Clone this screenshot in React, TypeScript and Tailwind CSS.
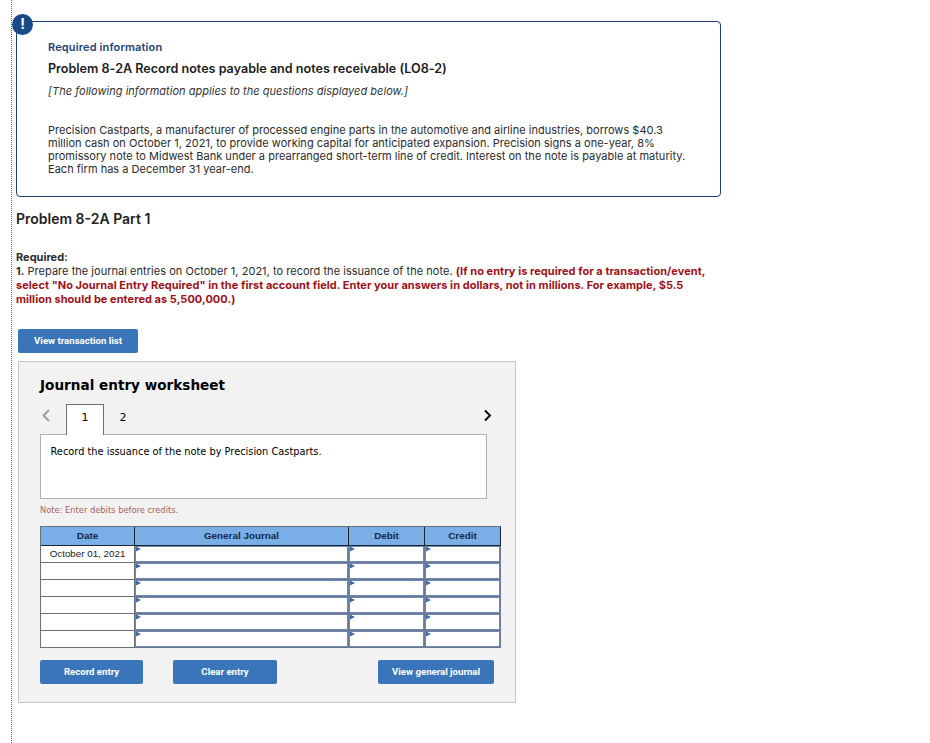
const rows = ["October 01, 2021", "", "", "", "", ""];

function EntryCell({ className }: { className: string }) {
  return (
    <div className={`${className} h-[17px] border-r border-b border-[#6a7a94]`}>
      <div className="h-full border border-[#7088ad] bg-white">
        <svg width="5" height="6" viewBox="0 0 5 6" className="-mt-px block">
          <path d="M0 0.5L5 3L0 5.5Z" fill="#3f6aa5" />
        </svg>
      </div>
    </div>
  );
}

function Button({ className, label }: { className: string; label: string }) {
  return (
    <button
      className={`${className} h-6 shrink-0 rounded-[2px] bg-[#3a75ba] pt-px text-center font-['Roboto',sans-serif] text-[9.6px] font-bold whitespace-nowrap text-white`}
    >
      {label}
    </button>
  );
}

function Arrow({ className, d }: { className: string; d: string }) {
  return (
    <svg width="8" height="13" viewBox="0 0 8 13" className={className}>
      <path d={d} fill="none" stroke="currentColor" strokeWidth="1.9" />
    </svg>
  );
}

function InfoBox() {
  return (
    <section className="relative h-[176px] w-[705px] rounded-[4px] border border-[#1f3f72] pt-[17px] pl-[31px] whitespace-nowrap">
      <div className="absolute -top-[8px] -left-[5px] flex size-[21px] items-center justify-center rounded-full bg-[#174a86] pb-[3px] text-[14px] font-bold text-white">
        !
      </div>
      <div className="text-[11px] leading-4 font-semibold tracking-[0.14px] text-[#1f4273]">Required information</div>
      <h1 className="mt-1.5 text-[12.6px] leading-4 font-semibold tracking-[-0.01px] text-[#1c1c1c]">
        Problem 8-2A Record notes payable and notes receivable (LO8-2)
      </h1>
      <p className="mt-1.5 text-[11px] leading-4 tracking-[0.03px] text-[#333] italic">
        [The following information applies to the questions displayed below.]
      </p>
      <p className="mt-[25px] text-[11px] leading-[13px] tracking-[0.02px] text-[#2b2b2b]">
        Precision Castparts, a manufacturer of processed engine parts in the automotive and airline industries, borrows $40.3
        <br />
        million cash on October 1, 2021, to provide working capital for anticipated expansion. Precision signs a one-year, 8%
        <br />
        promissory note to Midwest Bank under a prearranged short-term line of credit. Interest on the note is payable at maturity.
        <br />
        Each firm has a December 31 year-end.
      </p>
    </section>
  );
}

function Worksheet() {
  return (
    <section className="mt-2 ml-0.5 h-[342px] w-[498px] border border-[#c3c6c8] bg-[#f2f2f2] pl-[21px] font-['DejaVu_Sans',sans-serif]">
      <h2 className="pt-[13px] text-[13.6px] leading-5 font-bold text-black">Journal entry worksheet</h2>
      <div className="mt-[9px] flex h-[30px] w-[460px] text-[11px] text-black">
        <Arrow className="mt-[5px] ml-0.5 text-[#9a9a9a]" d="M7 1L1.5 6.5L7 12" />
        <div className="z-10 -mb-px ml-4 flex w-[38px] justify-center border border-b-0 border-[#6f6f6f] bg-white pt-[5px]">1</div>
        <div className="w-[38px] pt-1.5 text-center">2</div>
        <Arrow className="mt-[5px] mr-2 ml-auto text-black" d="M1 1.5L6 6.5L1 11.5" />
      </div>
      <div className="h-[65px] w-[447px] border border-[#b0b0b0] bg-white pt-2.5 pl-[9.5px] text-[9.8px] leading-[14px] text-black">
        Record the issuance of the note by Precision Castparts.
      </div>
      <div className="mt-[5px] text-[8.3px] leading-3 text-[#a8635e]">Note: Enter debits before credits.</div>

      <div className="mt-[10px] w-[461px] border-l border-[#6b6f78] font-['Liberation_Sans',sans-serif]">
        <div className="flex h-5 border-t border-b border-t-[#6b6f78] border-b-[#1b2430] bg-[#7aaee6] text-center text-[9.9px] leading-[18px] font-bold text-[#14294a]">
          <div className="w-[94px] border-r border-[#1b2430]">Date</div>
          <div className="w-[214px] border-r border-[#1b2430]">General Journal</div>
          <div className="w-[76px] border-r border-[#1b2430]">Debit</div>
          <div className="w-[76px] border-r border-[#1b2430]">Credit</div>
        </div>
        {rows.map((date, i) => (
          <div key={i} className="flex">
            <div className="h-[17px] w-[94px] border-r border-b border-[#6b6f78] bg-white text-center text-[9.8px] leading-4 text-[#222]">
              {date}
            </div>
            <EntryCell className="w-[214px]" />
            <EntryCell className="w-[76px]" />
            <EntryCell className="w-[76px]" />
          </div>
        ))}
      </div>

      <div className="mt-3 flex w-[454px]">
        <Button className="w-[103px]" label="Record entry" />
        <Button className="ml-[30px] w-[104px]" label="Clear entry" />
        <Button className="ml-auto w-[116px]" label="View general journal" />
      </div>
    </section>
  );
}

export default function App() {
  return (
    <main className="h-[743px] w-full overflow-hidden bg-white pl-[11px] font-['Inter',sans-serif]">
      <div className="h-full border-l border-dotted border-[#2f6f9c] pt-[21px] pl-1">
        <InfoBox />
        <h2 className="mt-3.5 text-[14px] leading-4 font-semibold text-[#222]">Problem 8-2A Part 1</h2>
        <div className="mt-[23px] text-[11px] leading-[14px] whitespace-nowrap text-[#2b2b2b]">
          <p className="font-bold">Required:</p>
          <p>
            <b>1.</b> <span className="tracking-[0.03px]">Prepare the journal entries on October 1, 2021, to record the issuance of the note.</span>{" "}
            <b className="tracking-[0.04px] text-[#9b1218]">(If no entry is required for a transaction/event,</b>
          </p>
          <p className="font-bold tracking-[0.04px] text-[#9b1218]">
            select "No Journal Entry Required" in the first account field. Enter your answers in dollars, not in millions. For example, $5.5
          </p>
          <p className="font-bold tracking-[0.04px] text-[#9b1218]">million should be entered as 5,500,000.)</p>
        </div>
        <div className="mt-[23px] ml-0.5 flex">
          <Button className="w-[120px]" label="View transaction list" />
        </div>
        <Worksheet />
      </div>
    </main>
  );
}
